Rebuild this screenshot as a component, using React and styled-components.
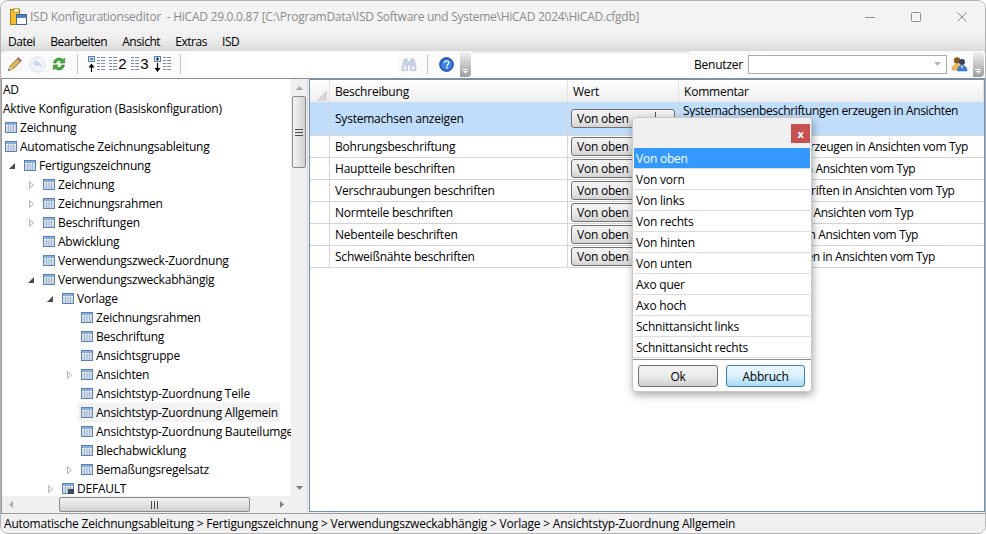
import React from 'react'
import styled, { createGlobalStyle } from 'styled-components'

const menuItems = ['Datei', 'Bearbeiten', 'Ansicht', 'Extras', 'ISD']

const treeItems = [
	{ label: 'AD', level: -1, plain: true },
	{ label: 'Aktive Konfiguration (Basiskonfiguration)', level: -1, plain: true },
	{ label: 'Zeichnung', level: 0 },
	{ label: 'Automatische Zeichnungsableitung', level: 0 },
	{ label: 'Fertigungszeichnung', level: 1, arrow: 'open' },
	{ label: 'Zeichnung', level: 2, arrow: 'closed' },
	{ label: 'Zeichnungsrahmen', level: 2, arrow: 'closed' },
	{ label: 'Beschriftungen', level: 2, arrow: 'closed' },
	{ label: 'Abwicklung', level: 2 },
	{ label: 'Verwendungszweck-Zuordnung', level: 2 },
	{ label: 'Verwendungszweckabhängig', level: 2, arrow: 'open' },
	{ label: 'Vorlage', level: 3, arrow: 'open' },
	{ label: 'Zeichnungsrahmen', level: 4 },
	{ label: 'Beschriftung', level: 4 },
	{ label: 'Ansichtsgruppe', level: 4 },
	{ label: 'Ansichten', level: 4, arrow: 'closed' },
	{ label: 'Ansichtstyp-Zuordnung Teile', level: 4 },
	{ label: 'Ansichtstyp-Zuordnung Allgemein', level: 4, active: true },
	{ label: 'Ansichtstyp-Zuordnung Bauteilumgebung', level: 4 },
	{ label: 'Blechabwicklung', level: 4 },
	{ label: 'Bemaßungsregelsatz', level: 4, arrow: 'closed' },
	{ label: 'DEFAULT', level: 3, arrow: 'closed', marked: true },
]

const rows = [
	{ name: 'Systemachsen anzeigen', comment: 'Systemachsenbeschriftungen erzeugen in Ansichten vom Typ', selected: true },
	{ name: 'Bohrungsbeschriftung', comment: 'Bohrungsbeschriftung erzeugen in Ansichten vom Typ' },
	{ name: 'Hauptteile beschriften', comment: 'Hauptteile beschriften in Ansichten vom Typ' },
	{ name: 'Verschraubungen beschriften', comment: 'Verschraubungen beschriften in Ansichten vom Typ' },
	{ name: 'Normteile beschriften', comment: 'Normteile beschriften in Ansichten vom Typ' },
	{ name: 'Nebenteile beschriften', comment: 'Nebenteile beschriften in Ansichten vom Typ' },
	{ name: 'Schweißnähte beschriften', comment: 'Schweißnähte beschriften in Ansichten vom Typ' },
]

const options = [
	'Von oben',
	'Von vorn',
	'Von links',
	'Von rechts',
	'Von hinten',
	'Von unten',
	'Axo quer',
	'Axo hoch',
	'Schnittansicht links',
	'Schnittansicht rechts',
]

const GlobalStyle = createGlobalStyle`
	html, body {
		margin: 0;
		padding: 0;
		background: #fff;
	}
	* {
		box-sizing: border-box;
	}
`

const TableIcon = ({ marked }) => (
	<TreeIcon viewBox="0 0 12 11" width="12" height="11">
		<rect x="0.5" y="0.5" width="11" height="10" fill="#fff" stroke="#5a82b4" />
		<rect x="1" y="1" width="10" height="2" fill="#86aede" />
		<path d="M1 5h10M1 7h10M1 9h10M3.5 3v7M6 3v7M8.5 3v7" stroke="#a3b8d2" strokeWidth="1" fill="none" />
		{marked && <rect x="6" y="6" width="6" height="5" fill="#3c4a5e" />}
	</TreeIcon>
)

const Pencil = () => (
	<svg width="16" height="16" viewBox="0 0 16 16">
		<path d="M1.5 14.5l1-4L11.5 1.5l3 3-9 9z" fill="#e3b35a" stroke="#8a6c3a" strokeWidth="0.8" />
		<path d="M11.5 1.5l3 3-1.6 1.6-3-3z" fill="#b9736a" />
		<path d="M1.5 14.5l1-4 3 3z" fill="#e8d9b8" />
		<path d="M1.5 14.5l.5-1.8 1.3 1.3z" fill="#333" />
	</svg>
)

const UndoIcon = () => (
	<svg width="17" height="17" viewBox="0 0 17 17">
		<circle cx="8.5" cy="8.5" r="7.6" fill="#f3f6fb" stroke="#d5dfee" />
		<path d="M3.8 7.2L7.6 3.8v2.2c3 0 5.4 1.6 5.4 6.5-1-2.4-2.6-3.2-5.4-3.2v2.3z" fill="#c8d6ea" />
	</svg>
)

const RefreshIcon = () => (
	<svg width="16" height="16" viewBox="0 0 16 16">
		<path d="M2.5 7C3 3.8 5.4 2 8 2c1.6 0 3 .6 4 1.7L13.6 2v5H8.8l1.6-1.6C9.8 4.8 9 4.5 8 4.5 6.6 4.5 5.6 5.5 5.2 7z" fill="#47a83c" stroke="#2c7d26" strokeWidth="0.6" />
		<path d="M13.5 9c-.5 3.2-2.9 5-5.5 5-1.6 0-3-.6-4-1.7L2.4 14V9h4.8l-1.6 1.6c.6.6 1.4.9 2.4.9 1.4 0 2.4-1 2.8-2.5z" fill="#47a83c" stroke="#2c7d26" strokeWidth="0.6" />
	</svg>
)

const levelY = [1.5, 4.5, 7.5, 10.5, 13.5]

const LevelLines = ({ x = 0 }) => (
	<path
		d={levelY.map((y) => `M${x} ${y}h3M${x + 4} ${y}h4`).join('')}
		stroke="#7d8da3"
		strokeWidth="1"
		fill="none"
	/>
)

const CollapseIcon = ({ sign, down }) => (
	<svg width="17" height="17" viewBox="0 0 17 17">
		<rect x="0.5" y="0.5" width="6" height="5" fill="#dbe8f6" stroke="#4f7db8" />
		<path d={sign === 'minus' ? 'M2 3h3' : 'M2 3h3M3.5 1.5v3'} stroke="#111" fill="none" />
		<path d={down ? 'M3.5 7v5' : 'M3.5 11v5'} stroke="#000" strokeWidth="1.2" fill="none" />
		<path d={down ? 'M0.5 12h6l-3 4z' : 'M0.5 11.5h6l-3-4z'} fill="#000" />
		<LevelLines x={9} />
	</svg>
)

const NumberIcon = ({ value }) => (
	<NumberWrap>
		<svg width="9" height="16" viewBox="0 0 9 16">
			<LevelLines />
		</svg>
		<span>{value}</span>
	</NumberWrap>
)

const Binoculars = () => (
	<svg width="16" height="15" viewBox="0 0 17 16">
		<path d="M3.5 2h3v3h4V2h3l2.5 9v3.5H10V8H7v6.5H1V11z" fill="#c6d2e4" stroke="#aebcd2" strokeWidth="0.7" />
		<circle cx="4" cy="11.5" r="2" fill="#e8eef6" />
		<circle cx="13" cy="11.5" r="2" fill="#e8eef6" />
	</svg>
)

const HelpIcon = () => (
	<svg viewBox="0 0 16 16" width="15" height="15">
		<circle cx="8" cy="8" r="7.4" fill="#2a62c8" stroke="#16409a" strokeWidth="0.8" />
		<circle cx="8" cy="8" r="5.6" fill="#3f84e5" />
		<path d="M5.6 6.2C5.8 4.8 6.8 4.1 8.1 4.1c1.4 0 2.4.8 2.4 2 0 1.6-2 1.7-2 3.3" fill="none" stroke="#fff" strokeWidth="1.5" />
		<rect x="7.6" y="10.4" width="1.8" height="1.7" fill="#fff" />
	</svg>
)

const UsersIcon = () => (
	<svg width="17" height="16" viewBox="0 0 17 16">
		<circle cx="6" cy="4.5" r="3.2" fill="#8a5a24" />
		<path d="M1 14c0-4 2-5.5 5-5.5s4 1.5 4 5.5z" fill="#f0bd55" stroke="#b98a2e" strokeWidth="0.5" />
		<circle cx="11" cy="6" r="3" fill="#3a3f55" />
		<path d="M6.5 15c0-4 1.8-5.5 4.5-5.5S16 11 16 15z" fill="#3f7fd0" stroke="#23589f" strokeWidth="0.5" />
		<path d="M10 10h2l-1 2.5z" fill="#fff" />
	</svg>
)

const Chevron = () => (
	<svg width="7" height="5" viewBox="0 0 7 5">
		<path d="M0 0.5h6" stroke="#fff" fill="none" />
		<path d="M1 2h5L3.5 4.5z" fill="#fff" />
	</svg>
)

const App = () => (
	<>
		<GlobalStyle />
		<Window>
			<TitleBar>
				<AppIcon viewBox="0 0 17 18" width="17" height="18">
					<rect x="0.5" y="1.5" width="9" height="15" fill="#f0c030" stroke="#a27c16" />
					<rect x="4" y="0.5" width="5" height="4" fill="#fff3b8" stroke="#a27c16" strokeWidth="0.6" />
					<rect x="6.5" y="6.5" width="10" height="10" fill="#fff" stroke="#48628f" />
					<rect x="7" y="7" width="9" height="3" fill="#4f7fc0" />
				</AppIcon>
				<TitleText>ISD Konfigurationseditor&nbsp; - HiCAD 29.0.0.87 [C:\ProgramData\ISD Software und Systeme\HiCAD 2024\HiCAD.cfgdb]</TitleText>
				<WindowControls>
					<svg width="12" height="12" viewBox="0 0 12 12">
						<path d="M1 6.5h10" stroke="#8d8d8d" fill="none" />
					</svg>
					<svg width="12" height="12" viewBox="0 0 12 12">
						<rect x="1.5" y="1.5" width="9" height="9" rx="1" stroke="#8d8d8d" fill="none" />
					</svg>
					<svg width="12" height="12" viewBox="0 0 12 12">
						<path d="M1.5 1.5l9 9M10.5 1.5l-9 9" stroke="#8d8d8d" fill="none" />
					</svg>
				</WindowControls>
			</TitleBar>

			<MenuBar>
				{menuItems.map((item) => (
					<MenuItem key={item}>{item}</MenuItem>
				))}
			</MenuBar>

			<ToolbarRow>
				<Toolbar>
					<ToolButton><Pencil /></ToolButton>
					<ToolButton><UndoIcon /></ToolButton>
					<ToolButton><RefreshIcon /></ToolButton>
					<ToolSeparator />
					<ToolButton><CollapseIcon sign="minus" /></ToolButton>
					<ToolButton><NumberIcon value="2" /></ToolButton>
					<ToolButton><NumberIcon value="3" /></ToolButton>
					<ToolButton><CollapseIcon sign="plus" down /></ToolButton>
					<ToolSeparator />
					<ToolSpacer />
					<ToolButton><Binoculars /></ToolButton>
					<ToolSeparator />
					<ToolButton><HelpIcon /></ToolButton>
					<Overflow><Chevron /></Overflow>
				</Toolbar>
				<UserToolbar>
					<UserLabel>Benutzer</UserLabel>
					<UserSelect>
						<svg width="7" height="4" viewBox="0 0 7 4">
							<path d="M0 0h7L3.5 4z" fill="#b4b4b4" />
						</svg>
					</UserSelect>
					<UserButton><UsersIcon /></UserButton>
					<Overflow><Chevron /></Overflow>
				</UserToolbar>
			</ToolbarRow>

			<Content>
				<TreePane>
					<TreeMain>
						<TreeList>
							{treeItems.map((item, index) => (
								<TreeRow key={index} $level={item.level}>
									{item.level > 0 && (
										<TreeArrow>
											{item.arrow === 'open' && (
												<svg width="6" height="6" viewBox="0 0 6 6">
													<path d="M6 0v6H0z" fill="#4a4a4a" />
												</svg>
											)}
											{item.arrow === 'closed' && (
												<svg width="5" height="8" viewBox="0 0 5 8">
													<path d="M0.5 0.5l4 3.5-4 3.5z" fill="#f5f5f5" stroke="#b5b5b5" />
												</svg>
											)}
										</TreeArrow>
									)}
									<TreeLabel $active={item.active} $plain={item.plain}>
										{!item.plain && <TableIcon marked={item.marked} />}
										<span>{item.label}</span>
									</TreeLabel>
								</TreeRow>
							))}
						</TreeList>
						<VScroll>
							<ScrollArrow>
								<svg width="7" height="4" viewBox="0 0 7 4">
									<path d="M0 4h7L3.5 0z" fill="#a8a8a8" />
								</svg>
							</ScrollArrow>
							<VThumb>
								<svg width="8" height="7" viewBox="0 0 8 7">
									<path d="M0 .5h8M0 3.5h8M0 6.5h8" stroke="#4c4c4c" fill="none" />
								</svg>
							</VThumb>
							<ScrollArrow $end>
								<svg width="7" height="4" viewBox="0 0 7 4">
									<path d="M0 0h7L3.5 4z" fill="#808080" />
								</svg>
							</ScrollArrow>
						</VScroll>
					</TreeMain>
					<HScroll>
						<HArrow>
							<svg width="4" height="7" viewBox="0 0 4 7">
								<path d="M4 0v7L0 3.5z" fill="#a8a8a8" />
							</svg>
						</HArrow>
						<HThumb>
							<svg width="7" height="8" viewBox="0 0 7 8">
								<path d="M.5 0v8M3.5 0v8M6.5 0v8" stroke="#4c4c4c" fill="none" />
							</svg>
						</HThumb>
						<HArrow $end>
							<svg width="4" height="7" viewBox="0 0 4 7">
								<path d="M0 0v7l4-3.5z" fill="#808080" />
							</svg>
						</HArrow>
					</HScroll>
				</TreePane>

				<GridPane>
					<GridHeader>
						<CornerCell>
							<svg width="11" height="11" viewBox="0 0 11 11">
								<path d="M11 0v11H0z" fill="#d6d6d6" />
							</svg>
						</CornerCell>
						<HeaderCell>Beschreibung</HeaderCell>
						<HeaderCell>Wert</HeaderCell>
						<HeaderCell>Kommentar</HeaderCell>
					</GridHeader>
					{rows.map((row) => (
						<GridRow key={row.name} $selected={row.selected}>
							<RowHead />
							<NameCell>{row.name}</NameCell>
							<ValueCell>
								<ValueButton>
									<span>Von oben</span>
									<ButtonDivider />
								</ValueButton>
							</ValueCell>
							<CommentCell $selected={row.selected}>{row.comment}</CommentCell>
						</GridRow>
					))}
					<Popup>
						<PopupHead>
							<CloseButton>x</CloseButton>
						</PopupHead>
						<OptionList>
							{options.map((option, index) => (
								<Option key={option} $selected={index === 0}>{option}</Option>
							))}
						</OptionList>
						<PopupFooter>
							<PopupButton>Ok</PopupButton>
							<PopupButton $primary>Abbruch</PopupButton>
						</PopupFooter>
					</Popup>
				</GridPane>
			</Content>

			<StatusBar>Automatische Zeichnungsableitung &gt; Fertigungszeichnung &gt; Verwendungszweckabhängig &gt; Vorlage &gt; Ansichtstyp-Zuordnung Allgemein</StatusBar>
		</Window>
	</>
)

export default App

const Window = styled.div`
	width: 986px;
	height: 534px;
	display: flex;
	flex-direction: column;
	overflow: hidden;
	background: #f0f0f0;
	border: 1px solid #b4b4b4;
	border-radius: 8px;
	font-family: 'Open Sans', 'Noto Sans', sans-serif;
	font-size: 12px;
	letter-spacing: -0.22px;
	color: #000;
`

const TitleBar = styled.div`
	height: 31px;
	flex: none;
	display: flex;
	align-items: center;
	padding-left: 9px;
	background: #f3f3f3;
`

const AppIcon = styled.svg`
	flex: none;
	margin-right: 3px;
`

const TitleText = styled.div`
	color: #8b8b8b;
	letter-spacing: -0.26px;
	white-space: nowrap;
`

const WindowControls = styled.div`
	margin-left: auto;
	display: flex;
	align-items: center;
	gap: 34px;
	padding-right: 17px;
`

const MenuBar = styled.div`
	height: 19px;
	flex: none;
	display: flex;
	align-items: center;
	gap: 15px;
	padding-left: 7px;
	letter-spacing: -0.45px;
	background: linear-gradient(#f1f1f1, #f0f0f0 30%, #d9d9d9);
`

const MenuItem = styled.span`
	line-height: 18px;
`

const ToolbarRow = styled.div`
	height: 27px;
	flex: none;
	display: flex;
	justify-content: space-between;
	padding: 0 1px 1px 2px;
	background: linear-gradient(#dcdcdc, #fff 3px);
`

const Toolbar = styled.div`
	width: 468px;
	display: flex;
	align-items: center;
	padding-left: 1px;
	background: #fbfbfb;
	border-radius: 4px 0 0 4px;
`

const ToolButton = styled.div`
	width: 22px;
	height: 22px;
	flex: none;
	display: flex;
	align-items: center;
	justify-content: center;
`

const ToolSeparator = styled.div`
	width: 1px;
	height: 20px;
	flex: none;
	margin: 0 7px;
	background: #c4c4c4;
`

const ToolSpacer = styled.div`
	width: 210px;
	height: 22px;
	flex: none;
	background: #fff;
`

const Overflow = styled.div`
	width: 11px;
	height: 25px;
	flex: none;
	margin-left: auto;
	display: flex;
	align-items: flex-end;
	justify-content: center;
	padding-bottom: 3px;
	border-radius: 0 4px 4px 0;
	background: linear-gradient(#f0f0f0, #9c9c9c);
`

const NumberWrap = styled.div`
	display: flex;
	align-items: center;
	font-family: 'Liberation Sans', sans-serif;
	font-size: 15px;
	letter-spacing: 0;
	line-height: 16px;
`

const UserToolbar = styled.div`
	width: 296px;
	display: flex;
	align-items: center;
	padding-left: 6px;
	background: #fbfbfb;
	border-radius: 4px 0 0 4px;
`

const UserLabel = styled.div`
	width: 54px;
	flex: none;
	font-size: 12px;
`

const UserSelect = styled.div`
	width: 199px;
	height: 19px;
	flex: none;
	display: flex;
	align-items: center;
	justify-content: flex-end;
	padding-right: 5px;
	background: #fff;
	border: 1px solid #ababab;
`

const UserButton = styled.div`
	width: 25px;
	flex: none;
	display: flex;
	justify-content: center;
`

const Content = styled.div`
	flex: 1;
	min-height: 0;
	display: flex;
	border-top: 1px solid #8e8e8e;
`

const TreePane = styled.div`
	width: 307px;
	flex: none;
	display: flex;
	flex-direction: column;
	background: #fff;
	border-left: 1px solid #9a9a9a;
	border-right: 1px solid #d8d8d8;
`

const TreeMain = styled.div`
	flex: 1;
	min-height: 0;
	display: flex;
`

const TreeList = styled.div`
	width: 289px;
	flex: none;
	overflow: hidden;
	padding-top: 1px;
`

const TreeRow = styled.div`
	height: 19px;
	display: flex;
	align-items: center;
	white-space: nowrap;
	padding-left: ${(props) => (props.$level > 0 ? (props.$level - 1) * 19 : 0)}px;
`

const TreeArrow = styled.span`
	width: 19px;
	flex: none;
	display: flex;
	justify-content: flex-end;
	padding-right: 6px;
`

const TreeLabel = styled.div`
	height: 19px;
	display: flex;
	align-items: center;
	padding: 0 2px 0 ${(props) => (props.$plain ? '1px' : '3px')};
	background: ${(props) => (props.$active ? '#f3f3f3' : 'transparent')};
`

const TreeIcon = styled.svg`
	flex: none;
	margin-right: 3px;
`

const VScroll = styled.div`
	width: 16px;
	flex: none;
	display: flex;
	flex-direction: column;
	background: #f0f0f0;
`

const ScrollArrow = styled.div`
	height: 17px;
	flex: none;
	display: flex;
	align-items: center;
	justify-content: center;
	margin-top: ${(props) => (props.$end ? 'auto' : '0')};
`

const VThumb = styled.div`
	width: 14px;
	height: 72px;
	flex: none;
	margin-left: 1px;
	display: flex;
	align-items: center;
	justify-content: center;
	border: 1px solid #8a8a8a;
	border-radius: 2px;
	background: linear-gradient(90deg, #f2f2f2, #e4e4e4 50%, #cfcfcf);
`

const HScroll = styled.div`
	height: 17px;
	flex: none;
	display: flex;
	align-items: center;
	background: #f0f0f0;
`

const HArrow = styled.div`
	width: 17px;
	height: 17px;
	flex: none;
	display: flex;
	align-items: center;
	justify-content: center;
	margin-left: ${(props) => (props.$end ? 'auto' : '0')};
	margin-right: ${(props) => (props.$end ? '17px' : '40px')};
`

const HThumb = styled.div`
	width: 191px;
	height: 15px;
	flex: none;
	display: flex;
	align-items: center;
	justify-content: center;
	border: 1px solid #8a8a8a;
	border-radius: 2px;
	background: linear-gradient(#f2f2f2, #e4e4e4 50%, #cfcfcf);
`

const GridPane = styled.div`
	position: relative;
	flex: 1;
	margin-left: 1px;
	margin-bottom: 1px;
	background: #fff;
	border: 1px solid #6d93b8;
`

const columns = '20px 238px 111px 1fr'

const GridHeader = styled.div`
	height: 22px;
	display: grid;
	grid-template-columns: ${columns};
	background: linear-gradient(#fff, #f6f6f6 50%, #efefef);
`

const CornerCell = styled.div`
	display: flex;
	align-items: flex-end;
	justify-content: flex-end;
	padding: 0 2px 1px 0;
	border-right: 1px solid #e2e2e2;
`

const HeaderCell = styled.div`
	display: flex;
	align-items: center;
	padding-left: 5px;
	border-right: 1px solid #e2e2e2;
`

const GridRow = styled.div`
	height: ${(props) => (props.$selected ? '34px' : '22px')};
	display: grid;
	grid-template-columns: ${columns};
	background: ${(props) => (props.$selected ? '#c0ddfb' : '#fff')};
	border-bottom: 1px solid #d4d4d4;
`

const RowHead = styled.div`
	border-right: 1px solid #d4d4d4;
`

const NameCell = styled.div`
	display: flex;
	align-items: center;
	padding-left: 5px;
	border-right: 1px solid #d4d4d4;
`

const ValueCell = styled.div`
	display: flex;
	align-items: center;
	padding-left: 3px;
	border-right: 1px solid #d4d4d4;
`

const ValueButton = styled.div`
	position: relative;
	width: 104px;
	height: 19px;
	display: flex;
	align-items: center;
	padding-left: 5px;
	border: 1px solid #707070;
	border-radius: 3px;
	background: linear-gradient(#f3f3f3, #ebebeb 50%, #d4d4d4);
`

const ButtonDivider = styled.i`
	position: absolute;
	right: 18px;
	top: 2px;
	bottom: 2px;
	width: 1px;
	background: #555;
`

const CommentCell = styled.div`
	padding: ${(props) => (props.$selected ? '1px 4px 0' : '0 4px')};
	display: ${(props) => (props.$selected ? 'block' : 'flex')};
	align-items: center;
	line-height: 16px;
	letter-spacing: -0.34px;
	white-space: ${(props) => (props.$selected ? 'normal' : 'nowrap')};
	overflow: hidden;
`

const Popup = styled.div`
	position: absolute;
	left: 322px;
	top: 37px;
	width: 180px;
	height: 275px;
	display: flex;
	flex-direction: column;
	padding: 0 1px;
	background: #fff;
	border: 1px solid #c9c9c9;
	border-radius: 4px;
	box-shadow: 1px 3px 8px rgba(0, 0, 0, 0.35);
`

const PopupHead = styled.div`
	height: 30px;
	flex: none;
	display: flex;
	justify-content: flex-end;
	padding-top: 6px;
	background: #f0f0f0;
	margin: 0 -1px;
	border-radius: 3px 3px 0 0;
`

const CloseButton = styled.div`
	width: 19px;
	height: 19px;
	display: flex;
	align-items: center;
	justify-content: center;
	margin-right: 1px;
	background: #c75050;
	color: #fff;
	font-weight: 700;
	font-size: 11px;
	line-height: 15px;
`

const OptionList = styled.div`
	flex: none;
`

const Option = styled.div`
	height: 21px;
	display: flex;
	align-items: center;
	padding-left: 2px;
	background: ${(props) => (props.$selected ? '#3399ff' : '#fff')};
	color: ${(props) => (props.$selected ? '#fff' : '#000')};
	border-bottom: 1px solid #dcdcdc;
`

const PopupFooter = styled.div`
	flex: 1;
	display: flex;
	align-items: center;
	justify-content: space-between;
	margin: 1px -1px 0;
	padding: 1px 4px 0 4px;
	border-top: 1px solid #8c8c8c;
`

const PopupButton = styled.div`
	width: ${(props) => (props.$primary ? '79px' : '80px')};
	height: 22px;
	margin: ${(props) => (props.$primary ? '0 2px 0 0' : '0 0 0 1px')};
	display: flex;
	align-items: center;
	justify-content: center;
	border-radius: 3px;
	border: 1px solid ${(props) => (props.$primary ? '#3c7fb1' : '#707070')};
	background: ${(props) =>
		props.$primary
			? 'linear-gradient(#eaf6fd, #d9f0fc 50%, #a7d9f5)'
			: 'linear-gradient(#f2f2f2, #ebebeb 50%, #cfcfcf)'};
`

const StatusBar = styled.div`
	height: 20px;
	flex: none;
	display: flex;
	align-items: center;
	padding-left: 3px;
	border-top: 1px solid #9d9d9d;
	background: #f0f0f0;
	letter-spacing: -0.21px;
	white-space: nowrap;
`
